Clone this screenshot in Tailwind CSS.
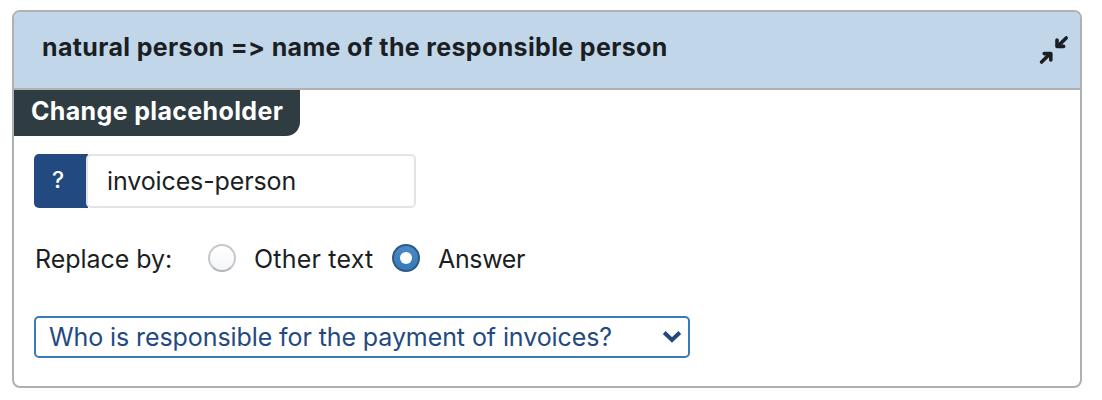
<!DOCTYPE html>
<html lang="en">
<head>
  <meta charset="UTF-8" />
  <meta name="viewport" content="width=device-width, initial-scale=1.0"/>
  <title>Change placeholder</title>
  <script src="https://cdn.jsdelivr.net/npm/@tailwindcss/browser@4"></script>
</head>
<body class="bg-white font-['Inter',sans-serif] text-[#1b1f23] text-[25px] leading-[30px] pl-3 pt-2.5 [font-feature-settings:'calt'_0]">

  <div class="w-[1070px] h-[378px] border-2 border-[#b0b0b0] rounded-lg overflow-hidden">

    <!-- Header -->
    <div class="flex justify-between h-[78px] bg-[#c2d6ea] border-b-2 border-[#b0b0b0] pl-7 pr-[11px]">
      <h2 class="pt-5 font-bold tracking-[0.35px] whitespace-nowrap">natural person =&gt; name of the responsible person</h2>
      <button aria-label="Collapse" class="mt-[23px] h-[30px]">
        <svg class="w-[30px] h-[30px]" viewBox="0 0 30 30" fill="none" stroke="#1b1f23" stroke-width="3.6" stroke-linecap="round" stroke-linejoin="round">
          <path d="M27.2 3 L19 11" />
          <path d="M18 5 V11.4 H24.6" />
          <path d="M2.6 27 L10.8 19" />
          <path d="M5.2 18.6 H11.8 V25" />
        </svg>
      </button>
    </div>

    <!-- Section label -->
    <div class="w-[286px] h-[46px] bg-[#2f3c42] text-white rounded-br-[14px] pl-[17px] pt-1.5">
      <h3 class="font-bold tracking-[0.35px] whitespace-nowrap">Change placeholder</h3>
    </div>

    <div class="pl-5 pt-[18px]">
      <!-- Placeholder name -->
      <div class="flex h-[54px]">
        <button class="w-[54px] bg-[#234a80] text-white font-medium text-[23px] rounded-l-[5px] pr-[6px] pb-[3px]">?</button>
        <input type="text" value="invoices-person" class="-ml-0.5 w-[330px] bg-white border-2 border-[#e4e4e4] rounded-[5px] pl-[19px] tracking-[-0.12px] outline-none" />
      </div>

      <!-- Replace options -->
      <div class="flex items-center h-7 mt-9 whitespace-nowrap">
        <span class="w-[174px] pl-px pt-0.5 tracking-[-0.05px]">Replace by:</span>
        <span class="w-7 h-7 rounded-full border-2 border-[#c8c8ca] border-b-[#b4b4b6] bg-linear-to-b from-white to-[#f3f6f9]"></span>
        <span class="w-[156px] pl-[18px] pt-0.5 tracking-[0.2px]">Other text</span>
        <span class="flex items-center justify-center w-7 h-7 rounded-full border-2 border-[#2c5a85] bg-linear-to-b from-[#4c8bc4] to-[#3479b9]">
          <span class="w-3 h-3 rounded-full bg-white"></span>
        </span>
        <span class="pl-[18px] pt-0.5 tracking-[-0.35px]">Answer</span>
      </div>

      <!-- Question select -->
      <div class="flex items-center justify-between w-[656px] h-[42px] mt-11 border-2 border-[#397abb] rounded-[5px] pl-[13px] pr-[6px] text-[#234a80] whitespace-nowrap">
        <span class="tracking-[-0.09px]">Who is responsible for the payment of invoices?</span>
        <svg class="w-5 h-5" viewBox="0 0 20 20" fill="none" stroke="#234a80" stroke-width="4">
          <path d="M2.2 5.5 L10 13 L17.8 5.5" />
        </svg>
      </div>
    </div>
  </div>

</body>
</html>
